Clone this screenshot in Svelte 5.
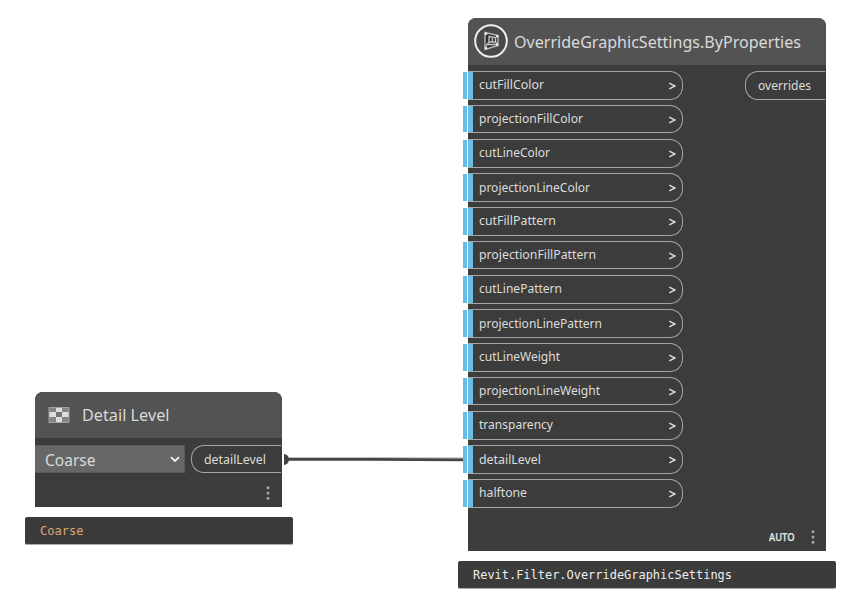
<script>
  const inputs = [
    { name: 'cutFillColor', width: 65, h: 29, dy: 0 },
    { name: 'projectionFillColor', width: 104, h: 28, dy: 0 },
    { name: 'cutLineColor', width: 71, h: 29, dy: 0 },
    { name: 'projectionLineColor', width: 111, h: 29, dy: 1 },
    { name: 'cutFillPattern', width: 77, h: 29, dy: 0 },
    { name: 'projectionFillPattern', width: 117, h: 28, dy: 0 },
    { name: 'cutLinePattern', width: 83, h: 29, dy: 0 },
    { name: 'projectionLinePattern', width: 123, h: 29, dy: 1 },
    { name: 'cutLineWeight', width: 81, h: 29, dy: 0 },
    { name: 'projectionLineWeight', width: 121, h: 28, dy: 0 },
    { name: 'transparency', width: 74, h: 29, dy: 0 },
    { name: 'detailLevel', width: 62, h: 29, dy: 1 },
    { name: 'halftone', width: 48, h: 29, dy: 0 }
  ];
</script>

{#snippet label(text, width, kind, base = 18)}
  <svg class="label {kind}" width={width} height="24" role="img" aria-label={text}>
    <text x="0" y={base} textLength={width} lengthAdjust="spacingAndGlyphs">{text}</text>
  </svg>
{/snippet}

{#snippet dots()}
  <svg class="dots" width="4" height="14" viewBox="0 0 4 14">
    <circle cx="2" cy="1.7" r="1.5" /><circle cx="2" cy="7" r="1.5" /><circle cx="2" cy="12.3" r="1.5" />
  </svg>
{/snippet}

<div class="canvas">
  <svg class="wire" width="182" height="14" viewBox="0 0 182 14">
    <path d="M2 1 C5.5 1.5 7 4 7 6.5 C7 9 5.5 11.5 2 12Z" fill="#424242" />
    <path d="M7 4.8H95L182 5" stroke="#a5a5a5" stroke-width="1" fill="none" />
    <path d="M6 6.4H90L182 6.8" stroke="#454545" stroke-width="2.7" fill="none" />
  </svg>

  <section class="node detail">
    <header>
      <svg class="checker" width="22" height="16" viewBox="0 0 22 16">
        <rect x=".5" width="21" height="16" fill="#a2a2a2" />
        <rect x="1.5" y="1" width="19" height="14" fill="#858585" />
        <path d="M8 1h6v4H8zM1.5 5H8v5H1.5zM14 5h6.5v5H14zM8 10h6v5H8z" fill="#dedede" />
        <path d="M8 5h6v5H8z" fill="#747474" />
      </svg>
      {@render label('Detail Level', 87.5, 'title')}
    </header>
    <div class="controls">
      <div class="select">
        {@render label('Coarse', 50.5, 'title', 17)}
        <svg width="10" height="7" viewBox="0 0 10 7"><path d="M1 1.2L5 5L9 1.2" fill="none" stroke="#f2f2f2" stroke-width="1.8" /></svg>
      </div>
      <div class="output">{@render label('detailLevel', 62, 'pin')}</div>
    </div>
    <footer>{@render dots()}</footer>
  </section>
  <div class="preview coarse">{@render label('Coarse', 43.5, 'mono')}</div>

  <section class="node override">
    <header>
      <svg class="emblem" width="34" height="34" viewBox="0 0 34 34">
        <circle cx="17" cy="17" r="15.8" fill="#494949" stroke="#eee" stroke-width="2" />
        <path d="M11 8.5L24 11.5V21.5L11 25.5Z" fill="#303030" stroke="#b5b5b5" stroke-width="1.4" />
        <path d="M15 12.5L21.5 13.5V18H15ZM15 18L12 22M21.5 18L23.5 20.5M18.3 13V18M14 20.5H22" fill="none" stroke="#c4c4c4" stroke-width="1.3" />
        <path d="M10.7 8.5h2.5v2.5h-2.5zM10.7 22.8h2.5v2.5h-2.5zM22 11h2.4v2.4H22zM22 19.6h2.4V22H22z" fill="#e4e4e4" />
      </svg>
      {@render label('OverrideGraphicSettings.ByProperties', 287, 'title')}
    </header>
    <div class="body">
      <div class="inputs">
        {#each inputs as port}
          <div class="slot">
            <div class="port" style="height: {port.h}px">
              <i class="outer"></i><i class="inner"></i>
              {@render label(port.name, port.width, 'pin', 17 + port.dy)}
              <svg class="arrow" width="8" height="8" viewBox="0 0 8 8"><path d="M1.3 1.2L7 4L1.3 6.8" fill="none" stroke="#dedede" stroke-width="1.4" /></svg>
            </div>
          </div>
        {/each}
      </div>
      <div class="output">{@render label('overrides', 53, 'pin')}</div>
    </div>
    <footer>{@render label('AUTO', 25.5, 'auto', 17)}{@render dots()}</footer>
  </section>
  <div class="preview result">{@render label('Revit.Filter.OverrideGraphicSettings', 259, 'mono')}</div>
</div>

<style>
  :global(body) { margin: 0; background: #fff; }
  .canvas { position: relative; width: 862px; height: 600px; overflow: hidden; background: #fff; }
  .canvas * { box-sizing: border-box; }
  svg { display: block; flex: none; }
  .label { overflow: visible; }
  .label text { font-family: "Noto Sans", "Open Sans", sans-serif; font-size: 12.5px; fill: #dcdcdc; }
  .title text { font-size: 16.5px; fill: #dadada; }
  .mono text { font-family: "DejaVu Sans Mono", "Liberation Mono", monospace; font-size: 11.5px; fill: #eee; }
  .auto text { font-size: 10.5px; font-weight: 500; fill: #e8e8e8; stroke: #e8e8e8; stroke-width: .25px; }
  .wire { position: absolute; left: 282px; top: 453px; }
  .node { position: absolute; background: #3c3c3c; border-radius: 8px 8px 0 0; }
  header { display: flex; background: #535353; border-radius: 8px 8px 0 0; }
  .detail { left: 35px; top: 392px; width: 247px; height: 115px; }
  .detail header { height: 46px; padding: 11px 0 0 13px; gap: 12px; }
  .checker { margin-top: 4px; }
  .controls { display: flex; padding-top: 7px; }
  .select { display: flex; justify-content: space-between; width: 150px; height: 28px; padding: 3px 4px 0 9.5px; background: #676767; border: solid #5a5a5a; border-width: 1px 1px 1px 0; }
  .select > svg:last-child { margin-top: 7px; }
  .output { border: 1px solid #a5a5a5; border-right: 0; border-radius: 13px 0 0 13px; }
  .controls .output { width: 90px; height: 28px; margin-left: 6px; padding-left: 12px; }
  .detail footer { padding: 13px 0 0 231px; }
  .dots { fill: #a6a6a6; }
  .preview { position: absolute; height: 28px; padding-left: 14.5px; border-radius: 2px; background: #3b3b3b; border-bottom: 1px solid #aaa; }
  .coarse { left: 25px; top: 517px; width: 268px; }
  .coarse .label, .coarse text { fill: #dea576; }
  .result { left: 458px; top: 561px; width: 378px; }
  .override { left: 468px; top: 18px; width: 358px; height: 533px; }
  .override header { height: 47px; padding: 6px 0 0 6px; }
  .override header .label { margin: 6px 0 0 6px; }
  .body { display: flex; justify-content: space-between; padding-top: 6px; }
  .slot { height: 34px; }
  .port { position: relative; display: flex; width: 215px; padding: 0 6px 0 11px; border: 1px solid #a5a5a5; border-left: 0; border-radius: 0 13px 13px 0; }
  .arrow { margin: 10px 0 0 auto; }
  .port i { position: absolute; top: 0; bottom: 0; background: #68bde7; }
  .outer { left: -5px; width: 4px; }
  .inner { left: 0; width: 5px; }
  .body .output { width: 80px; height: 29px; margin-right: 1px; padding-left: 11.5px; }
  .override footer { display: flex; justify-content: flex-end; padding: 11px 11px 0 0; }
  .override footer .label { margin: 0 17px 0 0; }
  .override footer .dots { margin-top: 6px; }
</style>
